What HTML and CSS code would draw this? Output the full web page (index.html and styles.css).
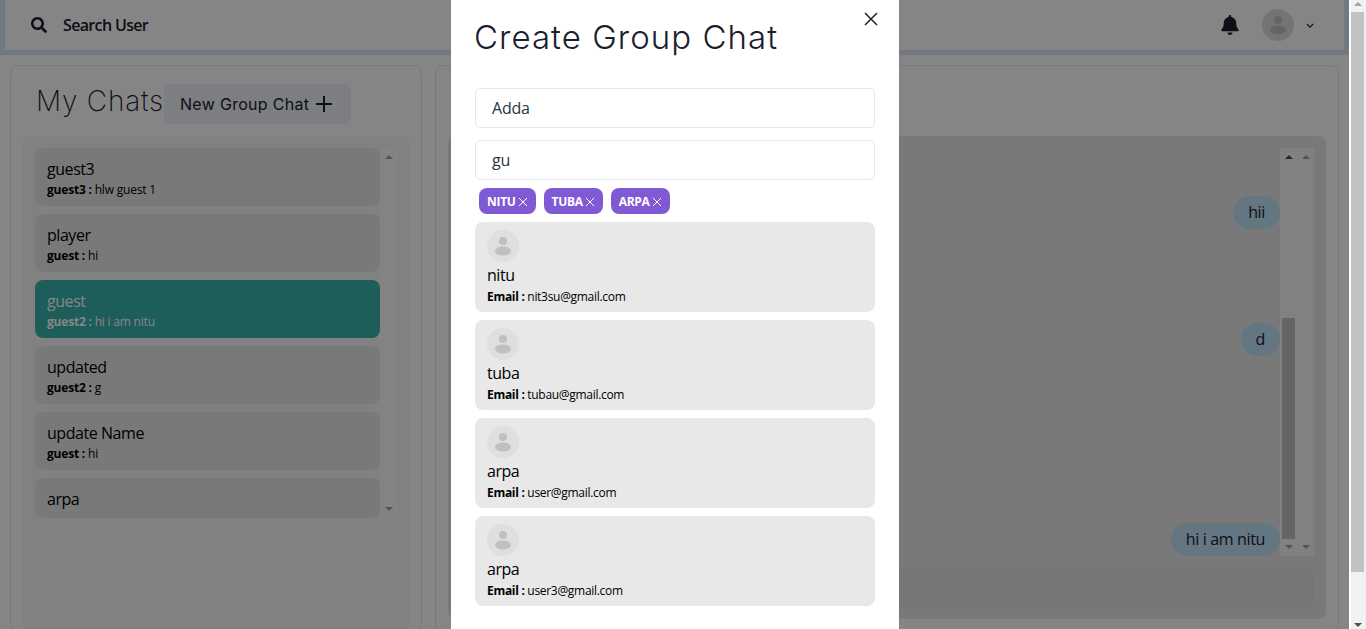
FILE: index.html

```html
<!DOCTYPE html>
<html>
<head>
    <meta charset="utf-8">
    <title>Chat</title>
    <link rel="stylesheet" href="styles.css">
</head>
<body>
<div class="window">
<div class="page">

    <!-- top bar -->
    <header class="topbar">
        <div class="search">
            <svg class="search-icon" viewBox="0 0 512 512"><path d="M505 442.700L405.300 343c-4.500-4.500-10.600-7-17-7H372c27.600-35.300 44-79.700 44-128C416 93.100 322.900 0 208 0S0 93.100 0 208s93.100 208 208 208c48.300 0 92.700-16.400 128-44v16.300c0 6.400 2.500 12.500 7 17l99.700 99.700c9.400 9.400 24.600 9.400 33.900 0l28.300-28.300c9.400-9.400 9.400-24.600.1-34zM208 336c-70.700 0-128-57.200-128-128 0-70.700 57.200-128 128-128 70.700 0 128 57.200 128 128 0 70.700-57.200 128-128 128z"/></svg>
            <span class="search-text">Search User</span>
        </div>
        <div class="topbar-right">
            <svg class="bell" viewBox="0 0 448 512"><path d="M224 512c35.320 0 63.970-28.650 63.970-64H160.030c0 35.350 28.650 64 63.970 64zm215.390-149.710c-19.320-20.760-55.470-51.990-55.470-154.290 0-77.700-54.480-139.900-127.940-155.160V32c0-17.670-14.320-32-31.980-32s-31.980 14.330-31.980 32v20.840C118.560 68.100 64.080 130.300 64.080 208c0 102.300-36.150 133.530-55.470 154.290-6 6.450-8.660 14.160-8.610 21.710.11 16.400 12.980 32 32.100 32h383.800c19.120 0 32-15.600 32.100-32 .05-7.550-2.610-15.270-8.610-21.710z"/></svg>
            <span class="avatar">
                <svg viewBox="0 0 32 32"><circle cx="16" cy="11" r="4"/><ellipse cx="16" cy="21" rx="8" ry="4.500"/></svg>
            </span>
            <svg class="chevron" viewBox="0 0 10 6"><path d="M1 1l4 4 4-4" fill="none" stroke="currentColor" stroke-width="1.600"/></svg>
        </div>
    </header>

    <div class="main">
        <!-- left side -->
        <section class="panel chats">
            <div class="chats-head">
                <h2 class="chats-title">My Chats</h2>
                <button class="new-group">New Group Chat
                    <svg viewBox="0 0 18 18"><path d="M9 1v16M1 9h16" fill="none" stroke="currentColor" stroke-width="2"/></svg>
                </button>
            </div>
            <div class="chats-box">
                <div class="chat-list">
                    <div class="chat-item"><div class="chat-name">guest3</div><div class="chat-last"><b>guest3 :</b> hlw guest 1</div></div>
                    <div class="chat-item"><div class="chat-name">player</div><div class="chat-last"><b>guest :</b> hi</div></div>
                    <div class="chat-item selected"><div class="chat-name">guest</div><div class="chat-last"><b>guest2 :</b> hi i am nitu</div></div>
                    <div class="chat-item"><div class="chat-name">updated</div><div class="chat-last"><b>guest2 :</b> g</div></div>
                    <div class="chat-item"><div class="chat-name">update Name</div><div class="chat-last"><b>guest :</b> hi</div></div>
                    <div class="chat-item"><div class="chat-name">arpa</div></div>
                </div>
                <div class="track list-track">
                    <span class="arrow up"></span>
                    <span class="arrow down"></span>
                </div>
            </div>
        </section>

        <!-- right side -->
        <section class="panel conversation">
            <div class="conversation-box">
                <div class="conversation-scroll">
                    <div class="messages">
                        <div class="bubble">hii</div>
                        <div class="bubble gap-a">d</div>
                        <div class="bubble gap-b">hi i am nitu</div>
                    </div>
                    <div class="track msg-track">
                        <span class="arrow up dark"></span>
                        <span class="thumb"></span>
                        <span class="arrow down"></span>
                    </div>
                    <div class="track msg-track">
                        <span class="arrow up"></span>
                        <span class="arrow down"></span>
                    </div>
                </div>
                <div class="message-input"></div>
            </div>
        </section>
    </div>

    <div class="overlay"></div>

    <!-- group chat modal -->
    <div class="modal">
        <h1 class="modal-title">Create Group Chat</h1>
        <svg class="modal-close" viewBox="0 0 14 14"><path d="M1 1l12 12M13 1L1 13" fill="none" stroke="currentColor" stroke-width="1.500"/></svg>
        <div class="modal-body">
            <div class="field">Adda</div>
            <div class="field">gu</div>
            <div class="tags">
                <span class="tag">NITU <svg viewBox="0 0 10 10"><path d="M1 1l8 8M9 1L1 9"/></svg></span>
                <span class="tag">TUBA <svg viewBox="0 0 10 10"><path d="M1 1l8 8M9 1L1 9"/></svg></span>
                <span class="tag">ARPA <svg viewBox="0 0 10 10"><path d="M1 1l8 8M9 1L1 9"/></svg></span>
            </div>
            <div class="user">
                <span class="avatar"><svg viewBox="0 0 32 32"><circle cx="16" cy="11" r="4"/><ellipse cx="16" cy="21" rx="8" ry="4.500"/></svg></span>
                <div class="user-name">nitu</div>
                <div class="user-email"><b>Email :</b> nit3su@gmail.com</div>
            </div>
            <div class="user">
                <span class="avatar"><svg viewBox="0 0 32 32"><circle cx="16" cy="11" r="4"/><ellipse cx="16" cy="21" rx="8" ry="4.500"/></svg></span>
                <div class="user-name">tuba</div>
                <div class="user-email"><b>Email :</b> tubau@gmail.com</div>
            </div>
            <div class="user">
                <span class="avatar"><svg viewBox="0 0 32 32"><circle cx="16" cy="11" r="4"/><ellipse cx="16" cy="21" rx="8" ry="4.500"/></svg></span>
                <div class="user-name">arpa</div>
                <div class="user-email"><b>Email :</b> user@gmail.com</div>
            </div>
            <div class="user">
                <span class="avatar"><svg viewBox="0 0 32 32"><circle cx="16" cy="11" r="4"/><ellipse cx="16" cy="21" rx="8" ry="4.500"/></svg></span>
                <div class="user-name">arpa</div>
                <div class="user-email"><b>Email :</b> user3@gmail.com</div>
            </div>
        </div>
    </div>
</div>

<!-- browser scrollbar -->
<div class="page-scrollbar">
    <span class="arrow up"></span>
    <span class="page-thumb"></span>
    <span class="arrow down dark"></span>
</div>
</div>
</body>
</html>
```

FILE: styles.css

```css
html, body {
    margin: 0;
    padding: 0;
    height: 100%;
    overflow: hidden;
}

body {
    font-family: "Open Sans", "Noto Sans", sans-serif;
    font-size: 16px;
    line-height: 24px;
    color: #1a202c;
    background-color: #ffffff;
}

.window {
    display: flex;
    height: 629px;
}

.page {
    position: relative;
    flex: 1;
    overflow: hidden;
}

/* top bar */
.topbar {
    display: flex;
    align-items: center;
    justify-content: space-between;
    box-sizing: border-box;
    height: 55px;
    padding: 0 30px 0 26px;
    background-color: #ffffff;
    border-left: 5px solid #dde9f5;
    border-right: 5px solid #dde9f5;
    border-bottom: 5px solid #dde9f5;
}

.search {
    display: flex;
    align-items: center;
    gap: 16px;
}

.search-icon {
    width: 16px;
    height: 16px;
    fill: #1a202c;
}

.search-text {
    font-weight: 600;
    letter-spacing: -0.65px;
}

.topbar-right {
    display: flex;
    align-items: center;
}

.bell {
    width: 18px;
    height: 20px;
    margin-right: 23px;
    fill: #1a202c;
}

.avatar {
    display: block;
    width: 32px;
    height: 32px;
    border-radius: 50%;
    background-color: #dfdfdf;
}

.avatar svg {
    display: block;
    width: 32px;
    height: 32px;
    fill: #c0c0c0;
}

.chevron {
    width: 8px;
    height: 5px;
    margin-left: 12px;
    color: #1a202c;
}

/* panels */
.main {
    display: flex;
    gap: 13px;
    padding: 10px;
}

.panel {
    box-sizing: border-box;
    height: 567px;
    border: 1px solid #e2e8f0;
    border-radius: 8px;
    padding: 12px;
    background-color: #ffffff;
}

.chats {
    width: 412px;
    flex-shrink: 0;
}

.conversation {
    flex: 1;
    padding-top: 70px;
}

.chats-head {
    display: flex;
    align-items: flex-start;
    height: 58px;
    padding-left: 13px;
}

.chats-title {
    margin: 5px 0 0;
    font-family: "Inter", sans-serif;
    font-size: 28px;
    font-weight: 200;
    line-height: 36px;
    letter-spacing: 0.8px;
    color: #1a202c;
}

.new-group {
    display: flex;
    align-items: center;
    gap: 6px;
    box-sizing: border-box;
    width: 187px;
    height: 40px;
    margin: 6px 0 0;
    padding: 0 16px;
    border: 0;
    border-radius: 6px;
    background-color: #edf2f7;
    font-family: "Inter", sans-serif;
    font-size: 16px;
    letter-spacing: 0.3px;
    white-space: nowrap;
    color: #1a202c;
}

.new-group svg {
    flex-shrink: 0;
    width: 18px;
    height: 18px;
}

.chats-box {
    display: flex;
    box-sizing: border-box;
    height: 500px;
    padding: 12px;
    background-color: #f8f8f8;
    border-radius: 8px;
    align-items: flex-start;
}

.chat-list {
    flex: 1;
    display: flex;
    flex-direction: column;
    gap: 8px;
}

.chat-item {
    padding: 9px 12px 7px;
    background-color: #e8e8e8;
    border-radius: 8px;
    color: #000000;
}

.chat-item.selected {
    background-color: #38b2ac;
    color: #ffffff;
}

.chat-name {
    letter-spacing: -0.45px;
}

.chat-last {
    font-size: 12px;
    line-height: 18px;
    letter-spacing: -0.2px;
}

/* fake scroll bars */
.track {
    position: relative;
    display: flex;
    flex-direction: column;
    align-items: center;
    justify-content: space-between;
    box-sizing: border-box;
    width: 17px;
    padding: 7px 0;
    background-color: #f8f8f8;
}

.list-track {
    height: 370px;
    background-color: #fcfcfc;
}

.arrow {
    display: block;
    width: 0;
    height: 0;
    border-left: 4px solid transparent;
    border-right: 4px solid transparent;
}

.arrow.up {
    border-bottom: 4px solid #a0a0a0;
}

.arrow.down {
    border-top: 4px solid #a0a0a0;
}

.arrow.up.dark {
    border-bottom-color: #505050;
}

.arrow.down.dark {
    border-top-color: #505050;
}

.conversation-box {
    box-sizing: border-box;
    height: 483px;
    padding: 12px;
    background-color: #e8e8e8;
    border-radius: 8px;
}

.conversation-scroll {
    display: flex;
    justify-content: flex-end;
    height: 408px;
}

.messages {
    display: flex;
    flex-direction: column;
    align-items: flex-end;
    justify-content: flex-end;
    flex: 1;
}

.bubble {
    padding: 5px 15px;
    line-height: 23px;
    border-radius: 20px;
    background-color: #bee3f8;
    color: #1a202c;
    letter-spacing: -0.35px;
}

.gap-a {
    margin-top: 94px;
}

.gap-b {
    margin-top: 167px;
}

.msg-track {
    height: 408px;
}

.thumb {
    position: absolute;
    left: 2px;
    top: 170px;
    width: 13px;
    height: 221px;
    background-color: #c1c1c1;
}

.message-input {
    height: 39px;
    margin-top: 13px;
    background-color: #e3e3e3;
    border-radius: 6px;
}

/* modal */
.overlay {
    position: absolute;
    top: 0;
    right: 0;
    bottom: 0;
    left: 0;
    background-color: rgba(0, 0, 0, 0.48);
}

.modal {
    position: absolute;
    top: 0;
    left: 451px;
    box-sizing: border-box;
    width: 448px;
    height: 640px;
    background-color: #ffffff;
}

.modal-title {
    margin: 0;
    padding: 19px 24px 0 23px;
    font-family: "Inter", sans-serif;
    font-size: 33px;
    font-weight: 300;
    line-height: 36px;
    letter-spacing: 1.05px;
    color: #1a202c;
}

.modal-close {
    position: absolute;
    top: 12px;
    right: 21px;
    width: 14px;
    height: 14px;
    color: #1a202c;
}

.modal-body {
    display: flex;
    flex-direction: column;
    align-items: stretch;
    gap: 8px;
    padding: 33px 24px 0;
}

.field {
    box-sizing: border-box;
    height: 40px;
    padding: 7px 16px;
    border: 1px solid #e2e8f0;
    border-radius: 6px;
    letter-spacing: -0.2px;
    color: #2d3340;
}

.field + .field {
    margin-top: 4px;
}

.tags {
    display: flex;
    gap: 8px;
    padding-left: 4px;
}

.tag {
    display: flex;
    align-items: center;
    gap: 2px;
    box-sizing: border-box;
    height: 26px;
    padding: 2px 8px 0;
    border-radius: 8px;
    background-color: #805ad5;
    color: #ffffff;
    font-size: 12px;
    font-weight: 700;
    letter-spacing: -0.3px;
}

.tag svg {
    width: 10px;
    height: 10px;
    fill: none;
    stroke: #ffffff;
    stroke-width: 1;
}

.user {
    height: 90px;
    box-sizing: border-box;
    padding: 8px 12px;
    background-color: #e8e8e8;
    border-radius: 8px;
    color: #000000;
}

.user-name {
    margin-top: 1px;
    letter-spacing: -0.45px;
}

.user-email {
    margin-top: 1px;
    font-size: 12px;
    line-height: 18px;
    letter-spacing: -0.3px;
}

/* browser scrollbar */
.page-scrollbar {
    display: flex;
    flex-direction: column;
    align-items: center;
    box-sizing: border-box;
    width: 17px;
    padding: 2px 2px 2px 0;
    border-left: 2px solid #ffffff;
    background-color: #f1f1f1;
}

.page-thumb {
    width: 13px;
    height: 560px;
    margin-top: 6px;
    background-color: #c1c1c1;
}

.page-scrollbar .arrow.down {
    margin-top: auto;
}
```
